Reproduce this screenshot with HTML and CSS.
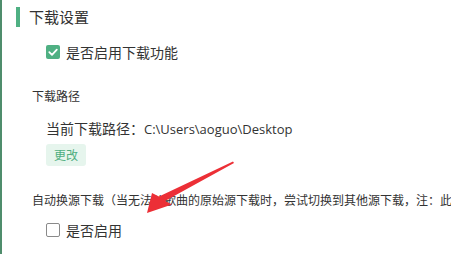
FILE: index.html
```html
<!DOCTYPE html>
<html lang="zh-CN">
<head>
<meta charset="utf-8">
<link rel="stylesheet" href="styles.css">
</head>
<body>
<div class="panel">
  <div class="title"><span class="title-bar"></span><span class="title-text">下载设置</span></div>
  <label class="check-row check-row-first">
    <span class="box box-on"><svg width="14" height="14" viewBox="0 0 14 14"><path d="M3.3 7.2 L6 9.8 L10.8 4.6" fill="none" stroke="#fff" stroke-width="1.8" stroke-linecap="round" stroke-linejoin="round"/></svg></span>
    <span class="check-label">是否启用下载功能</span>
  </label>
  <div class="sub-title">下载路径</div>
  <div class="path-line">当前下载路径：<span class="path-value">C:\Users\aoguo\Desktop</span></div>
  <button class="btn">更改</button>
  <div class="sub-title sub-title-long">自动换源下载（当无法从歌曲的原始源下载时，尝试切换到其他源下载，注：此</div>
  <label class="check-row check-row-second">
    <span class="box box-off"></span>
    <span class="check-label">是否启用</span>
  </label>
</div>
<svg class="arrow" width="451" height="254" viewBox="0 0 451 254">
  <path d="M233 161.5 L234 163 L165 201 L172 204.5 L147 213 L152 193 L159 196.5 Z" fill="#ec2f36"/>
</svg>
</body>
</html>
```
FILE: styles.css
```css
* { box-sizing: border-box; }
html, body {
  margin: 0;
  padding: 0;
  background: #fff;
}
body {
  width: 451px;
  height: 254px;
  overflow: hidden;
  position: relative;
  font-family: "Noto Sans CJK SC", "Noto Sans", sans-serif;
  color: #333;
}
.panel {
  border-left: 2px solid #4f8d6c;
  height: 254px;
  padding-top: 7px;
  overflow: hidden;
}
.title {
  display: flex;
  align-items: center;
  height: 20px;
  padding-left: 14px;
}
.title-bar {
  width: 4px;
  height: 20px;
  background: #4fb083;
}
.title-text {
  margin-left: 9px;
  font-size: 15px;
  line-height: 20px;
  color: #333;
}
.check-row {
  display: flex;
  align-items: center;
  height: 20px;
  padding-left: 44px;
}
.check-row-first { margin-top: 15px; }
.check-row-second { margin-top: 11px; }
.box {
  width: 14px;
  height: 14px;
  border-radius: 2px;
  display: flex;
  flex-shrink: 0;
}
.box-on { background: #4fb083; }
.box-off { border: 1px solid #8a8a8a; background: #fff; }
.check-label {
  margin-left: 6px;
  font-size: 14px;
  line-height: 20px;
  color: #333;
}
.sub-title {
  margin-top: 25px;
  padding-left: 30px;
  font-size: 12px;
  line-height: 18px;
  color: #333;
  white-space: nowrap;
}
.path-line {
  margin-top: 13px;
  padding-left: 44px;
  font-size: 14px;
  line-height: 20px;
  color: #333;
  white-space: nowrap;
}
.path-value {
  font-family: "Open Sans", "Noto Sans", sans-serif;
  font-size: 13px;
  color: #333;
}
.btn {
  display: block;
  margin-top: 5px;
  margin-left: 44px;
  width: 40px;
  height: 22px;
  border: none;
  border-radius: 3px;
  background: #e6f5ed;
  color: #4fae80;
  font-family: "Noto Sans CJK SC", sans-serif;
  font-size: 12px;
  line-height: 22px;
  padding: 0;
}
.sub-title-long {
  margin-top: 25px;
  overflow: hidden;
}
.arrow {
  position: absolute;
  left: 0;
  top: 0;
  pointer-events: none;
}
```
